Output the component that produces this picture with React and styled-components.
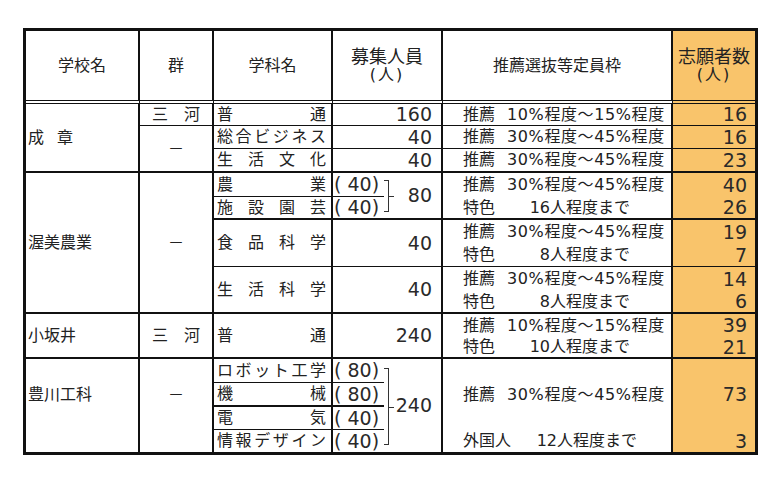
import React from 'react';
import styled, { createGlobalStyle } from 'styled-components';

const GlobalStyle = createGlobalStyle`
  html, body { margin: 0; padding: 0; background: #fff; }
  body {
    font-family: "DejaVu Sans", "Noto Sans CJK JP", sans-serif;
    color: #222;
  }
`;

const LINE = '#111';
const ORANGE = '#f9c46b';

const borderBottom = (b) =>
  b === 'double' ? `4px double ${LINE}` : b ? `${b}px solid ${LINE}` : 'none';

const Page = styled.div`
  width: 781px;
  height: 479px;
  box-sizing: border-box;
  padding: 28px 0 0 23px;
`;

const Sheet = styled.div`
  display: grid;
  grid-template-columns: 114px 74px 119px 51px 59px 230px 82px;
  grid-template-rows: 73px 22px 23px 24px 24px 23px 24px 23px 24px 23px 23px 22px 24px 24px 23px 22px;
  width: 735px;
  box-sizing: border-box;
  border: 3px solid ${LINE};
  background: #fff;
`;

const Cell = styled.div`
  grid-column: ${(p) => p.$col};
  grid-row: ${(p) => p.$row};
  box-sizing: border-box;
  min-width: 0;
  min-height: 0;
  display: flex;
  align-items: center;
  border-right: ${(p) => (p.$noRight ? 'none' : `2px solid ${LINE}`)};
  border-bottom: ${(p) => borderBottom(p.$b)};
  background: ${(p) => (p.$orange ? ORANGE : 'transparent')};
  font-size: 16px;
  line-height: 1.2;
  white-space: nowrap;
`;

const HeaderCell = styled(Cell)`
  flex-direction: column;
  justify-content: center;
  text-align: center;
  font-size: ${(p) => p.$size || 16}px;
  line-height: ${(p) => p.$lh || 1.2};
`;

const HeaderLine = styled.span`
  display: block;
  height: ${(p) => p.$h}px;
  line-height: ${(p) => p.$h}px;
  font-size: ${(p) => p.$size}px;
  letter-spacing: ${(p) => p.$ls || 0}px;
`;

const SchoolCell = styled(Cell)`
  padding-left: 2px;
  padding-bottom: ${(p) => p.$lift || 0}px;
  word-spacing: 8px;
`;

const GroupCell = styled(Cell)`
  justify-content: center;
  padding-bottom: ${(p) => p.$lift || 0}px;
`;

const SubjectCell = styled(Cell)`
  padding: 0 5px 0 3px;
`;

const Spread = styled.span`
  display: flex;
  justify-content: space-between;
  width: 100%;
`;

const Numeric = styled(Cell)`
  font-size: 19px;
  color: #2a2a2a;
`;

const ParenCell = styled(Numeric)`
  padding-left: 1px;
`;

const CapacityCell = styled(Numeric)`
  justify-content: flex-end;
  padding-right: 9px;
`;

const BracketCell = styled(Numeric)`
  align-items: stretch;
  padding-right: 9px;
`;

const Bracket = styled.span`
  flex: none;
  position: relative;
  width: 4px;
  margin: ${(p) => p.$top}px 0 ${(p) => p.$bottom}px;
  border: 1px solid #333;
  border-left: none;
  &::after {
    content: '';
    position: absolute;
    left: 100%;
    top: 50%;
    width: 6px;
    border-top: 1px solid #333;
  }
`;

const Total = styled.span`
  flex: 1;
  display: flex;
  align-items: center;
  justify-content: flex-end;
`;

const QuotaCell = styled(Cell)`
  padding-left: 20px;
`;

const QuotaLine = styled.span`
  display: flex;
  justify-content: space-between;
  gap: 12px;
  width: ${(p) => (p.$width ? `${p.$width}px` : 'auto')};
`;

const QuotaValue = styled.span`
  letter-spacing: ${(p) => (p.$wide ? '0.6px' : '0')};
`;

const ApplicantCell = styled(Numeric)`
  justify-content: flex-end;
  padding-right: 8px;
  background: ${ORANGE};
`;

function Distributed({ text }) {
  return (
    <Spread>
      {[...text].map((c, i) => (
        <span key={i}>{c}</span>
      ))}
    </Spread>
  );
}

function Quota({ label, value, width }) {
  return (
    <QuotaLine $width={width}>
      <span>{label}</span>
      <QuotaValue $wide={!width}>{value}</QuotaValue>
    </QuotaLine>
  );
}

function TwoLineHead({ title }) {
  return (
    <>
      <HeaderLine $h={18} $size={18}>{title}</HeaderLine>
      <HeaderLine $h={17} $size={16} $ls={2}>(人)</HeaderLine>
    </>
  );
}

const REC_LOW = '10%程度～15%程度';
const REC_HIGH = '30%程度～45%程度';

export default function App() {
  return (
    <>
      <GlobalStyle />
      <Page>
        <Sheet>
          {/* header */}
          <HeaderCell $col="1" $row="1" $b="double">学校名</HeaderCell>
          <HeaderCell $col="2" $row="1" $b="double">群</HeaderCell>
          <HeaderCell $col="3" $row="1" $b="double">学科名</HeaderCell>
          <HeaderCell $col="4 / 6" $row="1" $b="double">
            <TwoLineHead title="募集人員" />
          </HeaderCell>
          <HeaderCell $col="6" $row="1" $b="double">推薦選抜等定員枠</HeaderCell>
          <HeaderCell $col="7" $row="1" $b="double" $orange $noRight>
            <TwoLineHead title="志願者数" />
          </HeaderCell>

          {/* 成章 */}
          <SchoolCell $col="1" $row="2 / 5" $b={2}>成 章</SchoolCell>
          <GroupCell $col="2" $row="2" $b={1}>三　河</GroupCell>
          <GroupCell $col="2" $row="3 / 5" $b={2}>－</GroupCell>
          <SubjectCell $col="3" $row="2" $b={1}><Distributed text="普通" /></SubjectCell>
          <SubjectCell $col="3" $row="3" $b={1}><Distributed text="総合ビジネス" /></SubjectCell>
          <SubjectCell $col="3" $row="4" $b={2}><Distributed text="生活文化" /></SubjectCell>
          <CapacityCell $col="4 / 6" $row="2" $b={1}>160</CapacityCell>
          <CapacityCell $col="4 / 6" $row="3" $b={1}>40</CapacityCell>
          <CapacityCell $col="4 / 6" $row="4" $b={2}>40</CapacityCell>
          <QuotaCell $col="6" $row="2" $b={1}><Quota label="推薦" value={REC_LOW} /></QuotaCell>
          <QuotaCell $col="6" $row="3" $b={1}><Quota label="推薦" value={REC_HIGH} /></QuotaCell>
          <QuotaCell $col="6" $row="4" $b={2}><Quota label="推薦" value={REC_HIGH} /></QuotaCell>
          <ApplicantCell $col="7" $row="2" $b={1} $noRight>16</ApplicantCell>
          <ApplicantCell $col="7" $row="3" $b={1} $noRight>16</ApplicantCell>
          <ApplicantCell $col="7" $row="4" $b={2} $noRight>23</ApplicantCell>

          {/* 渥美農業 */}
          <SchoolCell $col="1" $row="5 / 11" $b={2}>渥美農業</SchoolCell>
          <GroupCell $col="2" $row="5 / 11" $b={2}>－</GroupCell>
          <SubjectCell $col="3" $row="5" $b={1}><Distributed text="農業" /></SubjectCell>
          <SubjectCell $col="3" $row="6" $b={2}><Distributed text="施設園芸" /></SubjectCell>
          <SubjectCell $col="3" $row="7 / 9" $b={1}><Distributed text="食品科学" /></SubjectCell>
          <SubjectCell $col="3" $row="9 / 11" $b={2}><Distributed text="生活科学" /></SubjectCell>
          <ParenCell $col="4" $row="5" $b={1} $noRight>( 40)</ParenCell>
          <ParenCell $col="4" $row="6" $b={2} $noRight>( 40)</ParenCell>
          <BracketCell $col="5" $row="5 / 7" $b={2}>
            <Bracket $top={7} $bottom={6} />
            <Total>80</Total>
          </BracketCell>
          <CapacityCell $col="4 / 6" $row="7 / 9" $b={1}>40</CapacityCell>
          <CapacityCell $col="4 / 6" $row="9 / 11" $b={2}>40</CapacityCell>
          <QuotaCell $col="6" $row="5" $b={0}><Quota label="推薦" value={REC_HIGH} /></QuotaCell>
          <QuotaCell $col="6" $row="6" $b={2}><Quota label="特色" value="16人程度まで" width={167} /></QuotaCell>
          <QuotaCell $col="6" $row="7" $b={0}><Quota label="推薦" value={REC_HIGH} /></QuotaCell>
          <QuotaCell $col="6" $row="8" $b={1}><Quota label="特色" value="8人程度まで" width={167} /></QuotaCell>
          <QuotaCell $col="6" $row="9" $b={0}><Quota label="推薦" value={REC_HIGH} /></QuotaCell>
          <QuotaCell $col="6" $row="10" $b={2}><Quota label="特色" value="8人程度まで" width={167} /></QuotaCell>
          <ApplicantCell $col="7" $row="5" $b={0} $noRight>40</ApplicantCell>
          <ApplicantCell $col="7" $row="6" $b={2} $noRight>26</ApplicantCell>
          <ApplicantCell $col="7" $row="7" $b={0} $noRight>19</ApplicantCell>
          <ApplicantCell $col="7" $row="8" $b={1} $noRight>7</ApplicantCell>
          <ApplicantCell $col="7" $row="9" $b={0} $noRight>14</ApplicantCell>
          <ApplicantCell $col="7" $row="10" $b={2} $noRight>6</ApplicantCell>

          {/* 小坂井 */}
          <SchoolCell $col="1" $row="11 / 13" $b={2}>小坂井</SchoolCell>
          <GroupCell $col="2" $row="11 / 13" $b={2}>三　河</GroupCell>
          <SubjectCell $col="3" $row="11 / 13" $b={2}><Distributed text="普通" /></SubjectCell>
          <CapacityCell $col="4 / 6" $row="11 / 13" $b={2}>240</CapacityCell>
          <QuotaCell $col="6" $row="11" $b={0}><Quota label="推薦" value={REC_LOW} /></QuotaCell>
          <QuotaCell $col="6" $row="12" $b={2}><Quota label="特色" value="10人程度まで" width={167} /></QuotaCell>
          <ApplicantCell $col="7" $row="11" $b={0} $noRight>39</ApplicantCell>
          <ApplicantCell $col="7" $row="12" $b={2} $noRight>21</ApplicantCell>

          {/* 豊川工科 */}
          <SchoolCell $col="1" $row="13 / 17" $b={0} $lift={22}>豊川工科</SchoolCell>
          <GroupCell $col="2" $row="13 / 17" $b={0} $lift={22}>－</GroupCell>
          <SubjectCell $col="3" $row="13" $b={1}><Distributed text="ロボット工学" /></SubjectCell>
          <SubjectCell $col="3" $row="14" $b={2}><Distributed text="機械" /></SubjectCell>
          <SubjectCell $col="3" $row="15" $b={1}><Distributed text="電気" /></SubjectCell>
          <SubjectCell $col="3" $row="16" $b={0}><Distributed text="情報デザイン" /></SubjectCell>
          <ParenCell $col="4" $row="13" $b={1} $noRight>( 80)</ParenCell>
          <ParenCell $col="4" $row="14" $b={2} $noRight>( 80)</ParenCell>
          <ParenCell $col="4" $row="15" $b={1} $noRight>( 40)</ParenCell>
          <ParenCell $col="4" $row="16" $b={0} $noRight>( 40)</ParenCell>
          <BracketCell $col="5" $row="13 / 17" $b={0}>
            <Bracket $top={9} $bottom={7} />
            <Total>240</Total>
          </BracketCell>
          <QuotaCell $col="6" $row="13 / 16" $b={0}><Quota label="推薦" value={REC_HIGH} /></QuotaCell>
          <QuotaCell $col="6" $row="16" $b={0}><Quota label="外国人" value="12人程度まで" width={174} /></QuotaCell>
          <ApplicantCell $col="7" $row="13 / 16" $b={0} $noRight>73</ApplicantCell>
          <ApplicantCell $col="7" $row="16" $b={0} $noRight>3</ApplicantCell>
        </Sheet>
      </Page>
    </>
  );
}
